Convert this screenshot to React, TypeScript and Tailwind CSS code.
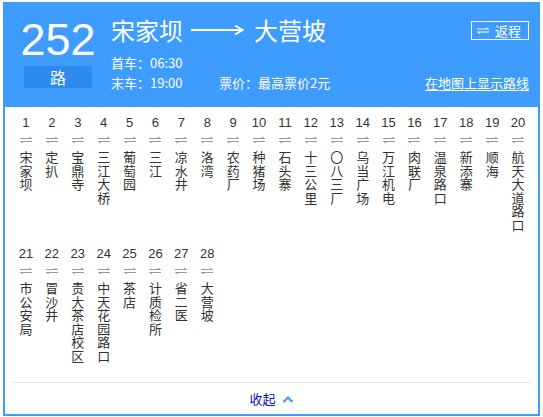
import React from "react";

const stations: string[] = [
  "宋家坝", "定扒", "宝鼎寺", "三江大桥", "葡萄园", "三江", "凉水井", "洛湾", "农药厂", "种猪场",
  "石头寨", "十三公里", "〇八三厂", "乌当广场", "万江机电", "肉联厂", "温泉路口", "新添寨", "顺海", "航天大道路口",
  "市公安局", "冒沙井", "贵大茶店校区", "中天花园路口", "茶店", "计质检所", "省二医", "大营坡",
];

const cjk = { fontFamily: '"Noto Sans CJK SC", "Liberation Sans", sans-serif' };
const latin = { fontFamily: '"Liberation Sans", "Noto Sans CJK SC", sans-serif' };

function Harpoons({ color, w = 12, h = 6 }: { color: string; w?: number; h?: number }) {
  return (
    <svg width={w} height={h} viewBox="0 0 12 6" fill="none" stroke={color} strokeWidth={1}>
      <path d="M0 1.5 H11.5 L9 0" />
      <path d="M12 4.5 H0.5 L3 6" />
    </svg>
  );
}

function Station({ idx, name }: { idx: number; name: string }) {
  return (
    <div className="flex flex-col items-center">
      <div className="text-[13px] leading-[15px] text-[#333]" style={latin}>
        {idx}
      </div>
      <div className="mt-[7px] flex h-[6px] items-center">
        <Harpoons color="#9a9a9a" />
      </div>
      <div
        className="mt-[7px] w-[13px] break-all text-center text-[13px] leading-[13.5px] text-[#333]"
        style={cjk}
      >
        {name}
      </div>
    </div>
  );
}

export default function App() {
  return (
    <div className="ml-[3px] mt-[2px] flex h-[414px] w-[537px] flex-col border-2 border-[#3d9cfd] bg-white">
      {/* route header */}
      <div className="flex h-[103px] bg-[#3d9cfd] text-white" style={cjk}>
        <div className="ml-[15px] flex w-[76px] flex-col items-center">
          <div className="mt-[13px] text-[45px] leading-none" style={latin}>
            252
          </div>
          <div className="mt-[4px] flex h-[22px] w-[68px] items-center justify-center bg-[#2e8bee] text-[16px] leading-none">
            路
          </div>
        </div>
        <div className="ml-[15px] mr-[9px] flex flex-1 flex-col">
          <div className="mt-[14px] flex items-center justify-between">
            <div className="flex items-center text-[24px] leading-[24px]">
              <span>宋家坝</span>
              <svg className="ml-[8px] mr-[10px]" width="53" height="10" viewBox="0 0 53 10" fill="none">
                <path d="M0 5 H50" stroke="white" strokeWidth="2" />
                <path d="M44 0.5 L51.5 5 L44 9.5" stroke="white" strokeWidth="2" />
              </svg>
              <span>大营坡</span>
            </div>
            <div className="flex h-[19px] w-[58px] items-center gap-[6px] border border-white pl-[5px] text-[13px] leading-none">
              <Harpoons color="white" w={12} h={7} />
              <span>返程</span>
            </div>
          </div>
          <div className="mt-[11px] text-[13px] leading-[20px]">首车：06:30</div>
          <div className="flex items-center text-[13px] leading-[20px]">
            <span className="w-[108px]">末车：19:00</span>
            <span className="flex-1">票价：最高票价2元</span>
            <span className="underline underline-offset-[2px]">在地图上显示路线</span>
          </div>
        </div>
      </div>

      {/* stop list */}
      <div className="ml-[8px] mt-[8px] grid w-[518px] grid-cols-20 gap-y-[15px]">
        {stations.map((s, i) => (
          <Station key={i} idx={i + 1} name={s} />
        ))}
      </div>

      {/* collapse bar */}
      <div className="mx-[7px] mt-auto flex h-[32px] items-center justify-center gap-[6px] border-t border-[#e6e6e6]">
        <span className="text-[13px] leading-none text-[#1010c8]" style={cjk}>
          收起
        </span>
        <svg width="12" height="8" viewBox="0 0 12 8" fill="none">
          <path d="M1.5 7 L6 2.5 L10.5 7" stroke="#3d9cfd" strokeWidth="2.2" />
        </svg>
      </div>
    </div>
  );
}
